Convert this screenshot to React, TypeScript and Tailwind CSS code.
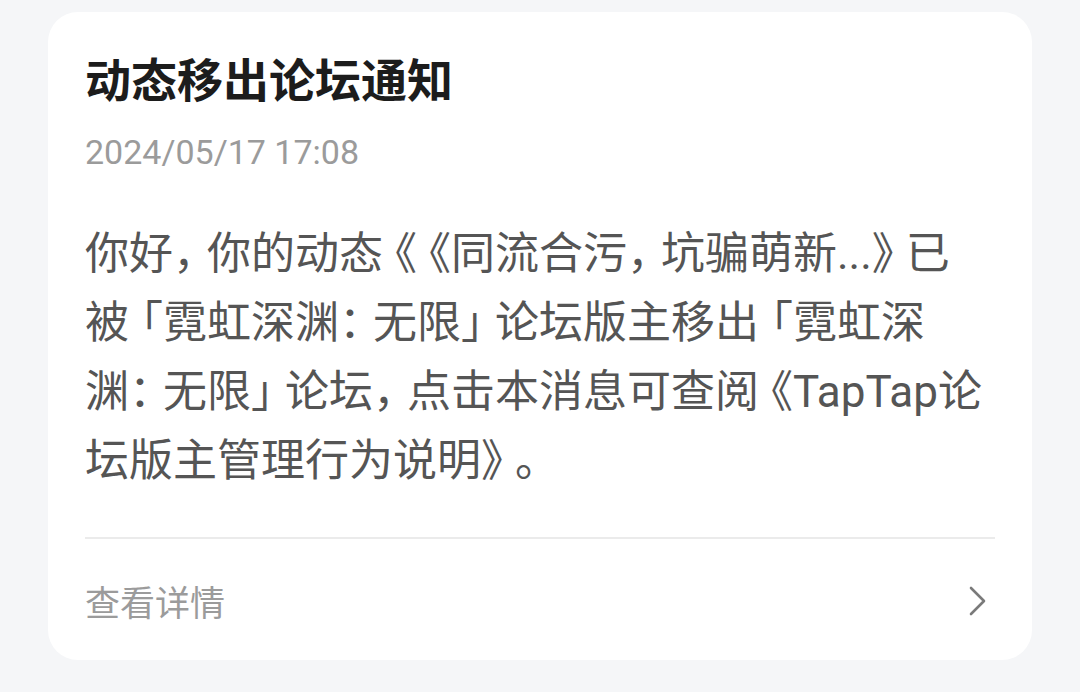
import React from 'react';

const bodyLines = [
  '你好，你的动态《《同流合污，坑骗萌新...》已',
  '被「霓虹深渊：无限」论坛版主移出「霓虹深',
  '渊：无限」论坛，点击本消息可查阅《TapTap论',
  '坛版主管理行为说明》。',
];

const closing = '，：」》。';
const opening = '《「';

// punctuation is narrower than a full em in the reference font
function BodyLine({ text }: { text: string }) {
  return (
    <div className="whitespace-nowrap">
      {Array.from(text).map((ch, i) => {
        if (closing.includes(ch)) {
          return (
            <span key={i} className="[font-feature-settings:'halt'] mr-[12px]">
              {ch}
            </span>
          );
        }
        if (opening.includes(ch)) {
          return (
            <span key={i} className="[font-feature-settings:'halt'] ml-[12px]">
              {ch}
            </span>
          );
        }
        return <React.Fragment key={i}>{ch}</React.Fragment>;
      })}
    </div>
  );
}

function Chevron() {
  return (
    <svg width="20" height="32" viewBox="0 0 20 32" fill="none">
      <path d="M3 3 L16 16 L3 29" stroke="#7a7a7a" strokeWidth="2.6" strokeLinecap="round" strokeLinejoin="round" />
    </svg>
  );
}

export default function App() {
  return (
    <div className="min-h-[692px] w-[1080px] bg-[#f5f6f8] pt-[12px] pb-[32px] px-[48px] font-['Roboto','Noto_Sans_CJK_SC',sans-serif]">
      <div className="bg-white rounded-[30px] pt-[35px] px-[37px] h-[648px] flex flex-col">
        {/* title */}
        <h1 className="text-[46px] leading-[60px] font-bold text-[#1c1c1c] font-['Noto_Sans_CJK_SC',sans-serif]">
          动态移出论坛通知
        </h1>
        <div className="mt-[23px] text-[34px] leading-[44px] text-[#9b9b9b] font-['Roboto',sans-serif]">
          2024/05/17 17:08
        </div>

        {/* message body */}
        <div className="mt-[46px] text-[44px] leading-[69px] text-[#555555]">
          {bodyLines.map((line, i) => (
            <BodyLine key={i} text={line} />
          ))}
        </div>

        <div className="mt-[41px] h-[2px] bg-[#ebebeb]" />

        <div className="mt-[30px] h-[64px] flex items-center justify-between">
          <span className="text-[35px] text-[#9b9b9b] font-['Noto_Sans_CJK_SC',sans-serif]">查看详情</span>
          <span className="mr-[7px]">
            <Chevron />
          </span>
        </div>
      </div>
    </div>
  );
}
